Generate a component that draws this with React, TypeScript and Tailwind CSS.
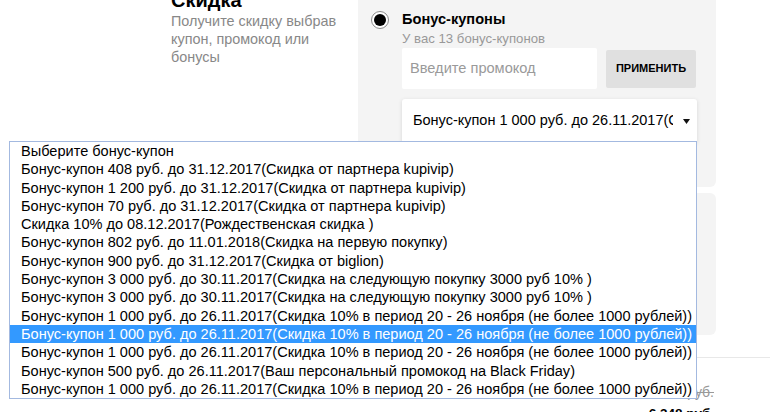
const items = [
  "Выберите бонус-купон",
  "Бонус-купон 408 руб. до 31.12.2017(Скидка от партнера kupivip)",
  "Бонус-купон 1 200 руб. до 31.12.2017(Скидка от партнера kupivip)",
  "Бонус-купон 70 руб. до 31.12.2017(Скидка от партнера kupivip)",
  "Скидка 10% до 08.12.2017(Рождественская скидка )",
  "Бонус-купон 802 руб. до 11.01.2018(Скидка на первую покупку)",
  "Бонус-купон 900 руб. до 31.12.2017(Скидка от biglion)",
  "Бонус-купон 3 000 руб. до 30.11.2017(Скидка на следующую покупку 3000 руб 10% )",
  "Бонус-купон 3 000 руб. до 30.11.2017(Скидка на следующую покупку 3000 руб 10% )",
  "Бонус-купон 1 000 руб. до 26.11.2017(Скидка 10% в период 20 - 26 ноября (не более 1000 рублей))",
  "Бонус-купон 1 000 руб. до 26.11.2017(Скидка 10% в период 20 - 26 ноября (не более 1000 рублей))",
  "Бонус-купон 1 000 руб. до 26.11.2017(Скидка 10% в период 20 - 26 ноября (не более 1000 рублей))",
  "Бонус-купон 500 руб. до 26.11.2017(Ваш персональный промокод на Black Friday)",
  "Бонус-купон 1 000 руб. до 26.11.2017(Скидка 10% в период 20 - 26 ноября (не более 1000 рублей))",
];

export default function App() {
  return (
    <div className="relative w-[770px] h-[412px] overflow-hidden bg-white font-['Liberation_Sans',Arial,sans-serif] text-black">
      <div className="flex -mt-[12px] pl-[171px]">
        <div className="w-[187px] pr-[20px]">
          <div className="text-[20px] leading-[24px] font-bold">Скидка</div>
          <div className="text-[14.4px] leading-[18px] text-[#888]">
            Получите скидку выбрав купон, промокод или бонусы
          </div>
        </div>
        <div className="w-[358px]">
          <div className="bg-[#f4f4f4] rounded-b-[6px] pt-[22px] pb-[44px] pl-[13px] pr-[19px]">
            <div className="flex items-center h-[20px]">
              <div className="w-[18px] h-[18px] rounded-full border border-[#8a8a8a] bg-white flex items-center justify-center">
                <div className="w-[12px] h-[12px] rounded-full bg-black" />
              </div>
              <span className="ml-[13px] text-[14.6px] font-bold">Бонус-купоны</span>
            </div>
            <div className="pl-[31px]">
              <div className="text-[13.2px] leading-[18px] text-[#999]">У вас 13 бонус-купонов</div>
              <div className="flex items-center gap-[9px]">
                <div className="w-[195px] h-[41px] bg-white rounded-[2px] px-[8px] flex items-center text-[14.6px] text-[#9a9a9a]">
                  Введите промокод
                </div>
                <div className="w-[90px] h-[38px] bg-[#e0e0e0] rounded-[2px] flex items-center justify-center text-[11px] font-bold">
                  ПРИМЕНИТЬ
                </div>
              </div>
              <div className="mt-[10px] w-[295px] h-[44px] bg-white rounded-[3px] shadow-[0_1px_4px_rgba(0,0,0,0.12)] flex items-center pl-[11px] pr-[7px]">
                <div className="w-[260px] overflow-hidden whitespace-nowrap text-[14.5px]">
                  Бонус-купон 1 000 руб. до 26.11.2017(Скидка 10% в период 20 - 26 ноября (не более 1000 рублей))
                </div>
                <div className="flex-1 flex justify-end">
                  <svg width="7" height="5" viewBox="0 0 7 5">
                    <polygon points="0,0 7,0 3.5,5" fill="#111" />
                  </svg>
                </div>
              </div>
            </div>
          </div>
          <div className="mt-[6px] h-[142px] bg-[#f4f4f4] rounded-[6px]" />
        </div>
      </div>

      <div className="mt-[22px] ml-[358px] border-t border-[#e8e8e8] pt-[25px] pr-[56px] flex flex-col items-end">
        <div className="text-[14px] leading-[18px] text-[#999] line-through">7 348 руб.</div>
        <div className="mt-[3px] text-[13.5px] leading-[20px] font-bold">6 348 руб.</div>
      </div>

      <div className="absolute left-[9px] top-[141px] w-[688px] border border-[#a3b9e0] bg-white">
        {items.map((t, i) => (
          <div
            key={i}
            className={
              i === 10
                ? "h-[18.3px] leading-[18.3px] pl-[11px] text-[14.55px] whitespace-nowrap bg-[#3399ff] text-white"
                : "h-[18.3px] leading-[18.3px] pl-[11px] text-[14.55px] whitespace-nowrap text-black"
            }
          >
            {t}
          </div>
        ))}
      </div>
    </div>
  );
}
